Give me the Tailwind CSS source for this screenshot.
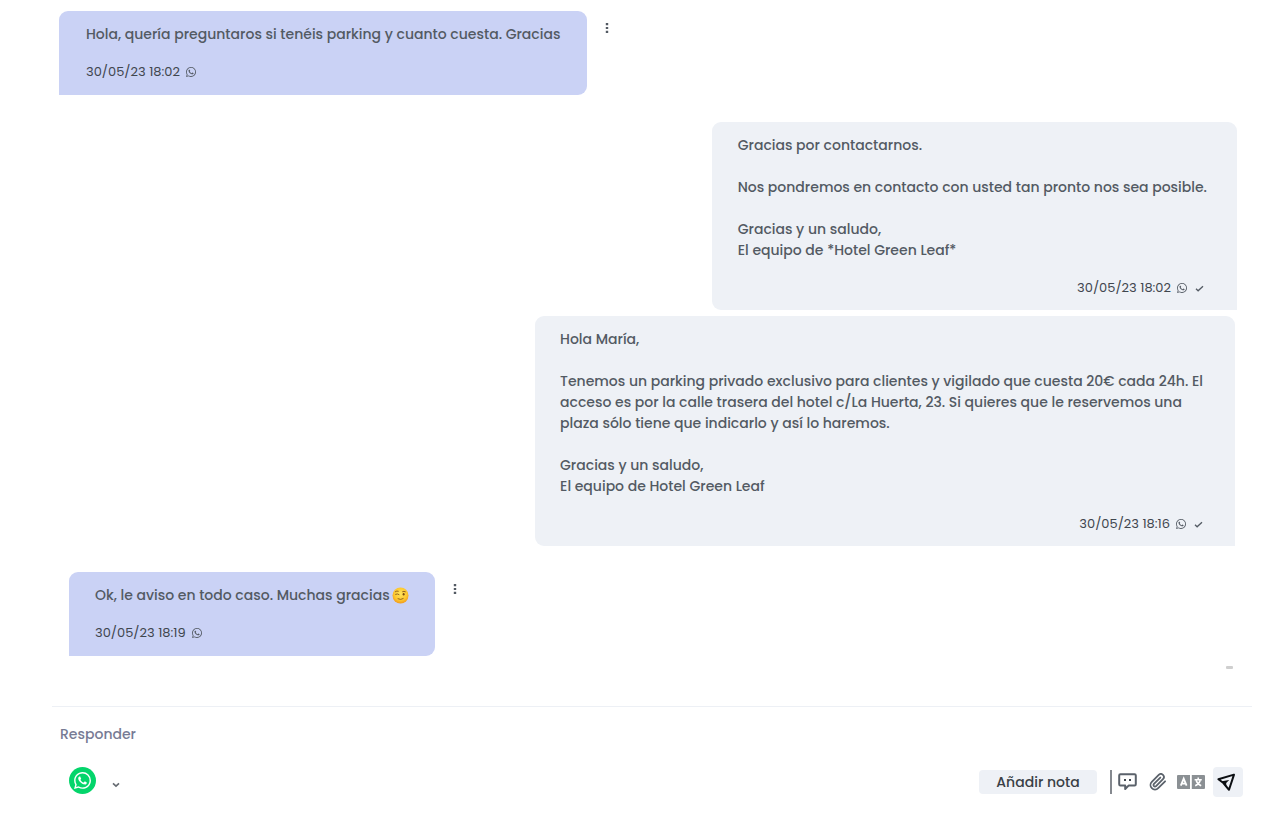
<!DOCTYPE html>
<html lang="es">
  <head>
    <meta charset="UTF-8">
    <meta name="viewport" content="width=device-width, initial-scale=1">
    <title>Conversación</title>
    <script src="https://cdn.jsdelivr.net/npm/@tailwindcss/browser@4"></script>
  </head>
  <body class="bg-white text-[#535a63] text-[14px] leading-[21px] font-['Poppins','Inter',sans-serif] font-medium">
    <!-- shared icons -->
    <svg class="hidden">
      <symbol id="whatsapp" viewBox="0 0 24 24">
        <path fill="currentColor" d="M17.472 14.382c-.297-.149-1.758-.867-2.03-.967-.273-.099-.471-.148-.67.15-.197.297-.767.966-.94 1.164-.173.199-.347.223-.644.075-.297-.15-1.255-.463-2.39-1.475-.883-.788-1.48-1.761-1.653-2.059-.173-.297-.018-.458.13-.606.134-.133.298-.347.446-.52.149-.174.198-.298.298-.497.099-.198.05-.371-.025-.52-.075-.149-.669-1.612-.916-2.207-.242-.579-.487-.5-.669-.51-.173-.008-.371-.01-.57-.01-.198 0-.52.074-.792.372-.272.297-1.04 1.016-1.04 2.479 0 1.462 1.065 2.875 1.213 3.074.149.198 2.096 3.2 5.077 4.487.709.306 1.262.489 1.694.625.712.227 1.36.195 1.871.118.571-.085 1.758-.719 2.006-1.413.248-.694.248-1.289.173-1.413-.074-.124-.272-.198-.57-.347m-5.421 7.403h-.004a9.87 9.87 0 01-5.031-1.378l-.361-.214-3.741.982.998-3.648-.235-.374a9.86 9.86 0 01-1.51-5.26c.001-5.45 4.436-9.884 9.888-9.884 2.64 0 5.122 1.03 6.988 2.898a9.825 9.825 0 012.893 6.994c-.003 5.45-4.437 9.884-9.885 9.884m8.413-18.297A11.815 11.815 0 0012.05 0C5.495 0 .16 5.335.157 11.892c0 2.096.547 4.142 1.588 5.945L.057 24l6.305-1.654a11.882 11.882 0 005.683 1.448h.005c6.554 0 11.89-5.335 11.893-11.893a11.821 11.821 0 00-3.48-8.413z"/>
      </symbol>
      <symbol id="check" viewBox="0 0 10 8">
        <path fill="none" stroke="currentColor" stroke-width="1.5" d="M1 4.4 3.4 6.6 9 1.4"/>
      </symbol>
      <symbol id="dots" viewBox="0 0 4 12">
        <path fill="currentColor" d="M.8 1h2.4v2.2H.8zM.8 4.9h2.4v2.2H.8zM.8 8.8h2.4V11H.8z"/>
      </symbol>
    </svg>

    <main class="flex flex-col pt-[11px]">
      <!-- incoming -->
      <div class="flex items-start gap-[18px] pl-[59px]">
        <div class="bg-[#cad2f5] rounded-[9px] rounded-bl-none pt-[13px] pb-3 px-[27px]">
          <p class="whitespace-nowrap">Hola, quería preguntaros si tenéis parking y cuanto cuesta. Gracias</p>
          <div class="mt-4 flex items-center gap-[6px] text-[13px] leading-[22px] font-normal">
            <time class="text-[#3f464e]">30/05/23 18:02</time>
            <svg class="w-[10px] h-[10px]"><use href="#whatsapp"/></svg>
          </div>
        </div>
        <button class="mt-[11px]" aria-label="Opciones"><svg class="w-1 h-3"><use href="#dots"/></svg></button>
      </div>

      <!-- outgoing -->
      <div class="mt-[27px] flex justify-end pr-[51px]">
        <div class="bg-[#eef1f6] rounded-[9px] rounded-br-none pt-[13px] pb-[11px] pl-[26px] pr-[30px]">
          <p class="whitespace-nowrap">Gracias por contactarnos.<br><br>Nos pondremos en contacto con usted tan pronto nos sea posible.<br><br>Gracias y un saludo,<br>El equipo de *Hotel Green Leaf*</p>
          <div class="mt-4 pr-[3px] flex items-center justify-end gap-[6px] text-[13px] leading-[22px] font-normal">
            <time class="text-[#3f464e]">30/05/23 18:02</time>
            <svg class="w-[10px] h-[10px]"><use href="#whatsapp"/></svg>
            <svg class="ml-[2px] w-[9px] h-[7px]"><use href="#check"/></svg>
          </div>
        </div>
      </div>

      <div class="mt-[6px] flex justify-end pr-[53px]">
        <div class="bg-[#eef1f6] rounded-[9px] rounded-br-none pt-[13px] pb-[11px] pl-[25px] pr-8">
          <p class="whitespace-nowrap">Hola María,<br><br>Tenemos un parking privado exclusivo para clientes y vigilado que cuesta 20€ cada 24h. El<br>acceso es por la calle trasera del hotel c/La Huerta, 23. Si quieres que le reservemos una<br>plaza sólo tiene que indicarlo y así lo haremos.<br><br>Gracias y un saludo,<br>El equipo de Hotel Green Leaf</p>
          <div class="mt-4 flex items-center justify-end gap-[6px] text-[13px] leading-[22px] font-normal">
            <time class="text-[#3f464e]">30/05/23 18:16</time>
            <svg class="w-[10px] h-[10px]"><use href="#whatsapp"/></svg>
            <svg class="ml-[2px] w-[9px] h-[7px]"><use href="#check"/></svg>
          </div>
        </div>
      </div>

      <!-- incoming -->
      <div class="mt-[26px] flex items-start gap-[18px] pl-[69px]">
        <div class="bg-[#cad2f5] rounded-[9px] rounded-bl-none pt-[13px] pb-3 px-[26px]">
          <p class="flex items-center gap-[2px] whitespace-nowrap">Ok, le aviso en todo caso. Muchas gracias
            <svg class="w-[17px] h-[17px]" viewBox="0 0 17 17" role="img" aria-label="😉">
              <defs>
                <radialGradient id="face" cx=".5" cy=".4" r=".6">
                  <stop offset="0" stop-color="#ffe45c"/>
                  <stop offset=".65" stop-color="#fdc82f"/>
                  <stop offset="1" stop-color="#f19a1c"/>
                </radialGradient>
              </defs>
              <circle cx="8.5" cy="8.5" r="8" fill="url(#face)"/>
              <ellipse cx="11.6" cy="7.2" rx="1" ry="1.2" fill="#7a4a12"/>
              <path fill="none" stroke="#8a5a1a" stroke-width=".9" stroke-linecap="round" d="M3.4 4.6q1.4-1 2.9-.4M3.6 7.3q1.8-1 3.4.2M10.6 4.6q1.4-.7 2.8.1M6 11.8q2.6 1.5 5.2-.2"/>
            </svg>
          </p>
          <div class="mt-4 flex items-center gap-[6px] text-[13px] leading-[22px] font-normal">
            <time class="text-[#3f464e]">30/05/23 18:19</time>
            <svg class="w-[10px] h-[10px]"><use href="#whatsapp"/></svg>
          </div>
        </div>
        <button class="mt-[11px]" aria-label="Opciones"><svg class="w-1 h-3"><use href="#dots"/></svg></button>
      </div>

      <div class="mt-[10px] flex justify-end pr-[55px]">
        <span class="w-[7px] h-[3px] rounded-[1px] bg-[#cfcfcf]"></span>
      </div>
    </main>

    <!-- reply box -->
    <form class="mt-[37px] ml-[52px] mr-9 border-t border-[#edf0f5] pt-[17px]">
      <input type="text" aria-label="Responder" placeholder="Responder" class="block w-full pl-2 outline-none placeholder:text-[#777b94]">
      <div class="mt-[22px] flex items-start justify-between pl-[17px] pr-[9px]">
        <button type="button" class="flex items-center gap-4" aria-label="Canal">
          <span class="flex items-center justify-center w-[27px] h-[27px] rounded-full bg-[#04d56b] text-white">
            <svg class="w-[17px] h-[17px]"><use href="#whatsapp"/></svg>
          </span>
          <svg class="mt-[9px] w-2 h-[6px] text-[#666b72]" viewBox="0 0 8 6"><path fill="none" stroke="currentColor" stroke-width="1.6" d="m1 1.3 3 2.9 3-2.9"/></svg>
        </button>
        <div class="flex items-center">
          <button type="button" class="w-[118px] h-6 rounded-[4px] bg-[#eef1f6] text-[#3a3f46]">Añadir nota</button>
          <span class="ml-[13px] w-[2px] h-6 bg-[#85898f]"></span>
          <button type="button" class="ml-[6px]" aria-label="Respuestas rápidas">
            <svg class="w-[19px] h-[18px]" viewBox="0 0 19 18">
              <path fill="none" stroke="#5b626b" stroke-width="2" stroke-linejoin="round" d="M2.4 1.2h14.2q1.2 0 1.2 1.2v8.8q0 1.2-1.2 1.2h-5.8L7.2 16v-3.6H2.4q-1.2 0-1.2-1.2V2.4q0-1.2 1.2-1.2z"/>
              <path fill="#3f464e" d="M6 6h2v2H6zM11 6h2v2h-2z"/>
            </svg>
          </button>
          <button type="button" class="ml-3" aria-label="Adjuntar">
            <svg class="w-[18px] h-[18px]" viewBox="0 0 24 24">
              <path fill="none" stroke="#5b626b" stroke-width="2.4" stroke-linecap="round" d="m21.44 11.05-9.19 9.19a6 6 0 0 1-8.49-8.49l9.19-9.19a4 4 0 0 1 5.66 5.66l-9.2 9.19a2 2 0 0 1-2.83-2.83l8.49-8.48"/>
            </svg>
          </button>
          <button type="button" class="ml-[10px]" aria-label="Traducir">
            <svg class="w-7 h-[14px]" viewBox="0 0 28 14">
              <path fill="#8b9094" d="M1 0h12v14H1q-1 0-1-1V1q0-1 1-1zM14.8 0H27q1 0 1 1v12q0 1-1 1H14.8z"/>
              <path fill="none" stroke="#fff" stroke-width="1.8" d="M3.8 10.6 6.7 3.6 9.6 10.6M4.8 8.6h3.8"/>
              <path fill="none" stroke="#fff" stroke-width="1.5" d="M17.6 4.8h7.2M21.2 2.6v2M19.2 5.4q1.2 3.8 5 5.4M23.2 5.4q-1.2 3.8-5 5.4"/>
            </svg>
          </button>
          <button type="submit" class="ml-2 flex items-center pl-1 w-[30px] h-[30px] rounded-[4px] bg-[#eef1f6]" aria-label="Enviar">
            <svg class="w-[19px] h-[19px]" viewBox="0 0 19 19">
              <path fill="none" stroke="#0c0f12" stroke-width="2" stroke-linejoin="round" d="M17 1.6 1.4 6.2l5 3.8 5.6 6.8z"/>
              <path fill="#0c0f12" d="m4.8 8.2 7.4-1.2-3 3 .2 4.6z"/>
            </svg>
          </button>
        </div>
      </div>
    </form>
  </body>
</html>
